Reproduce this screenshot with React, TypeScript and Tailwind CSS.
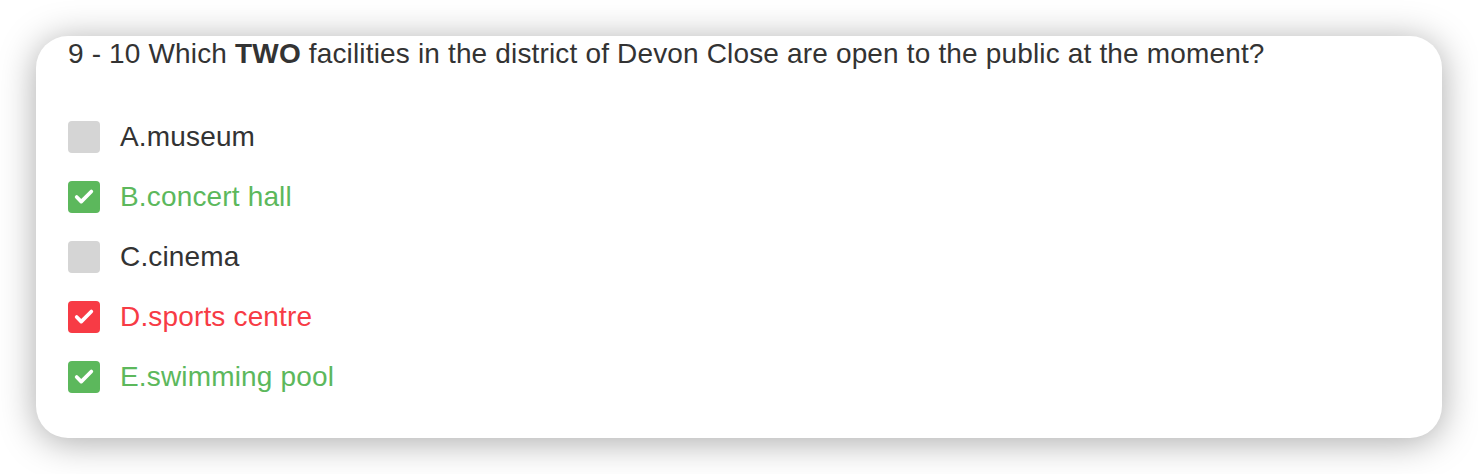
import { Check } from "lucide-react";

type Option = {
  label: string;
  state: "none" | "correct" | "wrong";
};

const options: Option[] = [
  { label: "A.museum", state: "none" },
  { label: "B.concert hall", state: "correct" },
  { label: "C.cinema", state: "none" },
  { label: "D.sports centre", state: "wrong" },
  { label: "E.swimming pool", state: "correct" },
];

function Box({ state }: { state: Option["state"] }) {
  if (state === "none") {
    return <span className="h-8 w-8 shrink-0 rounded-[4px] bg-[#d5d5d5]" />;
  }
  return (
    <span
      className={
        state === "correct"
          ? "flex h-8 w-8 shrink-0 items-center justify-center rounded-[4px] bg-[#5cb85c]"
          : "flex h-8 w-8 shrink-0 items-center justify-center rounded-[4px] bg-[#f73b45]"
      }
    >
      <Check className="h-[22px] w-[22px] text-white" strokeWidth={4} />
    </span>
  );
}

export default function App() {
  return (
    <div className="min-h-screen bg-white p-9 font-['Liberation_Sans',Arial,sans-serif] tracking-[0.16px]">
      <div className="h-[402px] rounded-[32px] bg-white px-8 pt-[2px] shadow-[0_4px_36px_rgba(0,0,0,0.34)]">
        {/* question */}
        <p className="text-[28px] leading-8 text-[#333]">
          9 - 10 Which <b>TWO</b> facilities in the district of Devon Close are open to the public at the moment?
        </p>

        {/* options */}
        <ul className="mt-[37px] flex flex-col">
          {options.map((o) => (
            <li key={o.label} className="flex h-[60px] items-center gap-5">
              <Box state={o.state} />
              <span
                className={
                  o.state === "correct"
                    ? "text-[28px] text-[#5cb85c]"
                    : o.state === "wrong"
                    ? "text-[28px] text-[#f73b45]"
                    : "text-[28px] text-[#333]"
                }
              >
                {o.label}
              </span>
            </li>
          ))}
        </ul>
      </div>
    </div>
  );
}
